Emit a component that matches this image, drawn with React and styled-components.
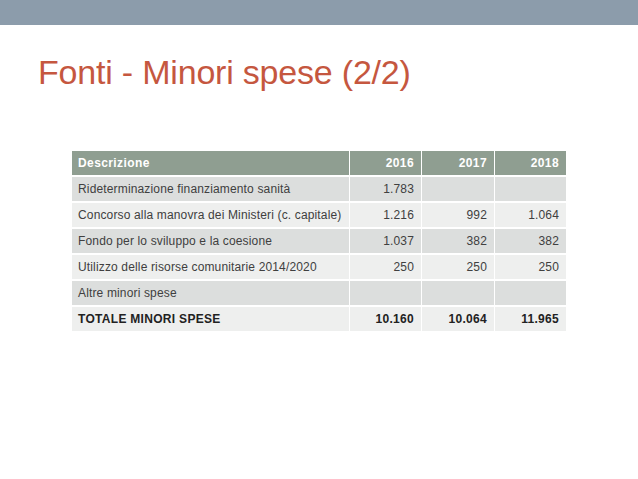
import React from 'react'
import styled, { createGlobalStyle } from 'styled-components'

const rows = [
  { label: 'Rideterminazione finanziamento sanità', values: ['1.783', '', ''] },
  { label: 'Concorso alla manovra dei Ministeri (c. capitale)', values: ['1.216', '992', '1.064'] },
  { label: 'Fondo per lo sviluppo e la coesione', values: ['1.037', '382', '382'] },
  { label: 'Utilizzo delle risorse comunitarie 2014/2020', values: ['250', '250', '250'] },
  { label: 'Altre minori spese', values: ['', '', ''] },
  { label: 'TOTALE MINORI SPESE', values: ['10.160', '10.064', '11.965'], total: true },
]

const App = () => {
  return (
    <>
      <GlobalStyle />
      <Slide>
        <TopBar />
        <Title>Fonti - Minori spese (2/2)</Title>
        <Table>
          <HeadCell>Descrizione</HeadCell>
          <HeadCell $num>2016</HeadCell>
          <HeadCell $num>2017</HeadCell>
          <HeadCell $num>2018</HeadCell>
          {rows.map((row, i) => (
            <React.Fragment key={row.label}>
              <Cell $dark={i % 2 === 0} $bold={row.total}>
                {row.label}
              </Cell>
              {row.values.map((v, j) => (
                <Cell key={j} $dark={i % 2 === 0} $bold={row.total} $num>
                  {v}
                </Cell>
              ))}
            </React.Fragment>
          ))}
        </Table>
      </Slide>
    </>
  )
}

export default App

const GlobalStyle = createGlobalStyle`
  body {
    margin: 0;
    background: #fff;
    font-family: "Liberation Sans", Arial, sans-serif;
  }
`
const Slide = styled.div`
  width: 638px;
  height: 479px;
  display: flex;
  flex-direction: column;
  background: #fff;
  overflow: hidden;
`
const TopBar = styled.div`
  height: 25px;
  background: #8c9cab;
`
const Title = styled.h1`
  margin: 30px 0 0 38px;
  font-size: 34px;
  line-height: 34px;
  font-weight: normal;
  color: #c5573f;
  letter-spacing: -0.2px;
`
const Table = styled.div`
  margin: 62px 0 0 72px;
  width: 494px;
  display: grid;
  grid-template-columns: 277px 71px 72px 71px;
  grid-template-rows: 24px repeat(6, 24px);
  column-gap: 1px;
  row-gap: 2px;
`
const HeadCell = styled.div`
  background: #8f9e91;
  color: #fff;
  font-size: 12px;
  font-weight: bold;
  letter-spacing: 0.4px;
  display: flex;
  align-items: center;
  justify-content: ${(p) => (p.$num ? 'flex-end' : 'flex-start')};
  padding: 0 7px 0 6px;
`
const Cell = styled.div`
  background: ${(p) => (p.$dark ? '#dcdedd' : '#eeefee')};
  color: ${(p) => (p.$bold ? '#222' : '#404040')};
  font-size: 12px;
  font-weight: ${(p) => (p.$bold ? 'bold' : 'normal')};
  letter-spacing: ${(p) => (p.$bold ? '0.3px' : '0.15px')};
  display: flex;
  align-items: center;
  justify-content: ${(p) => (p.$num ? 'flex-end' : 'flex-start')};
  padding: 0 7px 0 6px;
  white-space: nowrap;
`
